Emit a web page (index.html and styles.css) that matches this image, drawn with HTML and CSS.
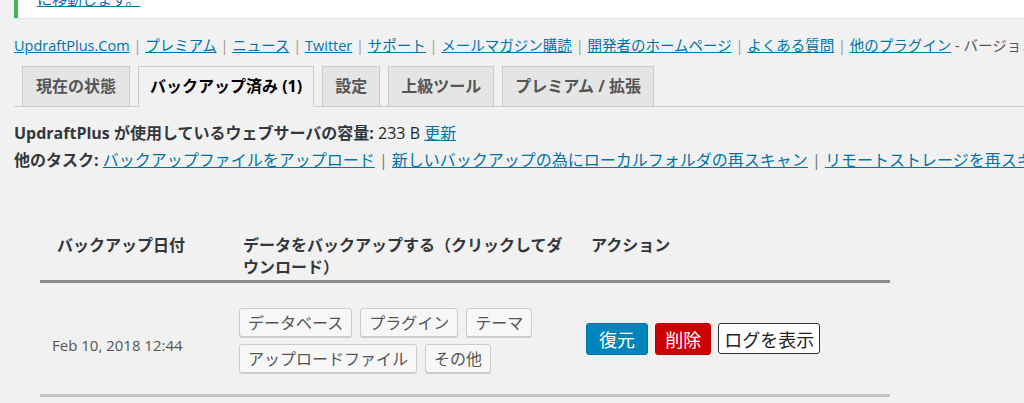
FILE: index.html
```html
<!DOCTYPE html>
<html lang="ja">
<head>
    <meta charset="UTF-8">
    <meta name="viewport" content="width=device-width, initial-scale=1.0">
    <title>UpdraftPlus バックアップ</title>
    <link rel="stylesheet" href="styles.css">
</head>
<body>
    <div class="notice">
        <a href="#" class="notice-text">に移動します。</a>
    </div>

    <div class="page">
        <p class="plugin-links">
            <a href="#">UpdraftPlus.Com</a> <span class="sep">|</span>
            <a href="#">プレミアム</a> <span class="sep">|</span>
            <a href="#">ニュース</a> <span class="sep">|</span>
            <a href="#">Twitter</a> <span class="sep">|</span>
            <a href="#">サポート</a> <span class="sep">|</span>
            <a href="#">メールマガジン購読</a> <span class="sep">|</span>
            <a href="#">開発者のホームページ</a> <span class="sep">|</span>
            <a href="#">よくある質問</a> <span class="sep">|</span>
            <a href="#">他のプラグイン</a> - バージョン: 1.14.2
        </p>

        <nav class="tabs">
            <a href="#" class="tab">現在の状態</a>
            <a href="#" class="tab active">バックアップ済み (1)</a>
            <a href="#" class="tab">設定</a>
            <a href="#" class="tab">上級ツール</a>
            <a href="#" class="tab">プレミアム / 拡張</a>
        </nav>

        <div class="info">
            <p><strong>UpdraftPlus が使用しているウェブサーバの容量:</strong> 233 B <a href="#">更新</a></p>
            <p><strong>他のタスク:</strong> <a href="#">バックアップファイルをアップロード</a> <span class="sep dark">|</span> <a href="#">新しいバックアップの為にローカルフォルダの再スキャン</a> <span class="sep dark">|</span> <a href="#">リモートストレージを再スキャン</a></p>
        </div>

        <table class="backups">
            <thead>
                <tr>
                    <th class="col-date">バックアップ日付</th>
                    <th class="col-data">データをバックアップする（クリックしてダウンロード）</th>
                    <th class="col-actions">アクション</th>
                </tr>
            </thead>
            <tbody>
                <tr>
                    <td class="date">Feb 10, 2018 12:44</td>
                    <td class="data">
                        <div class="downloads">
                            <button class="dl">データベース</button>
                            <button class="dl">プラグイン</button>
                            <button class="dl">テーマ</button>
                            <button class="dl">アップロードファイル</button>
                            <button class="dl">その他</button>
                        </div>
                    </td>
                    <td class="actions">
                        <button class="act restore">復元</button>
                        <button class="act delete">削除</button>
                        <button class="act log">ログを表示</button>
                    </td>
                </tr>
            </tbody>
        </table>
    </div>
</body>
</html>
```

FILE: styles.css
```css
body {
    margin: 0;
    padding: 0;
    font-family: 'Open Sans', 'Noto Sans CJK JP', sans-serif;
    background-color: #f1f1f1;
    color: #444;
    overflow: hidden;
}

a {
    color: #0073aa;
}

.notice {
    margin-left: 14px;
    height: 18px;
    background-color: #fff;
    border-left: 4px solid #46b450;
    box-shadow: 0 1px 1px rgba(0,0,0,0.06);
    overflow: hidden;
}

.notice-text {
    display: block;
    margin: -13px 0 0 19px;
    font-size: 15px;
    line-height: 24px;
}

.page {
    padding-left: 14px;
    white-space: nowrap;
}

.plugin-links {
    margin: 0;
    padding-top: 18px;
    font-size: 14.5px;
    line-height: 20px;
    color: #555;
}

.sep {
    color: #999;
}

.sep.dark {
    color: #777;
}

.tabs {
    display: flex;
    gap: 8px;
    margin-top: 10px;
    padding-left: 8px;
    border-bottom: 1px solid #ccc;
}

.tab {
    display: block;
    height: 39px;
    line-height: 39px;
    padding: 0 12px;
    margin-bottom: -1px;
    border: 1px solid #ccc;
    border-bottom: none;
    background-color: #e5e5e5;
    color: #555;
    font-size: 16px;
    font-weight: bold;
    text-decoration: none;
}

.tab:first-child {
    padding: 0 13px;
}

.tab.active {
    background-color: #f1f1f1;
    color: #000;
    border-bottom: 1px solid #f1f1f1;
    padding: 0 11px;
}

.info {
    margin-top: 13px;
    font-size: 16px;
    color: #23282d;
}

.info p {
    margin: 0;
    line-height: 27px;
}

.info strong {
    color: #32373c;
}

.backups {
    margin: 60px 0 0 26px;
    width: 850px;
    border-collapse: collapse;
    table-layout: fixed;
    white-space: normal;
}

.backups th {
    text-align: left;
    font-size: 16px;
    font-weight: bold;
    line-height: 22px;
    color: #32373c;
    padding: 0 0 2px;
    vertical-align: top;
    border-bottom: 3px solid #8c8c8c;
}

.col-date {
    width: 176px;
    padding-left: 17px !important;
}

.col-data {
    width: 320px;
    padding-left: 10px !important;
    padding-right: 17px !important;
}

.col-actions {
    padding-left: 11px !important;
}

.backups td {
    height: 99px;
    padding: 0;
    vertical-align: middle;
    border-bottom: 3px solid #c4c4c4;
}

.date {
    padding: 12px 0 0 12px !important;
    font-size: 15px;
    color: #555;
}

.data {
    padding-left: 6px !important;
}

.downloads {
    display: flex;
    flex-wrap: wrap;
    gap: 7px 8px;
    padding-top: 3px;
}

.dl {
    height: 29px;
    padding: 0 8px;
    font-family: 'Open Sans', 'Noto Sans CJK JP', sans-serif;
    font-size: 16px;
    color: #555;
    background-color: #f7f7f7;
    border: 1px solid #ccc;
    border-radius: 3px;
    box-shadow: 0 1px 0 #ccc;
}

.actions {
    padding-left: 6px !important;
    white-space: nowrap;
}

.act {
    height: 32px;
    padding: 0 12px;
    font-family: 'Open Sans', 'Noto Sans CJK JP', sans-serif;
    font-size: 18px;
    border-radius: 3px;
    margin-right: 3px;
    vertical-align: middle;
}

.restore {
    background-color: #0085ba;
    border: 1px solid #0073aa;
    color: #fff;
}

.delete {
    background-color: #c00;
    border: 1px solid #b00;
    color: #fff;
    padding: 0 9px;
}

.log {
    height: 31px;
    background-color: #fff;
    border: 1px solid #333;
    color: #222;
    padding: 0 5px;
}
```
